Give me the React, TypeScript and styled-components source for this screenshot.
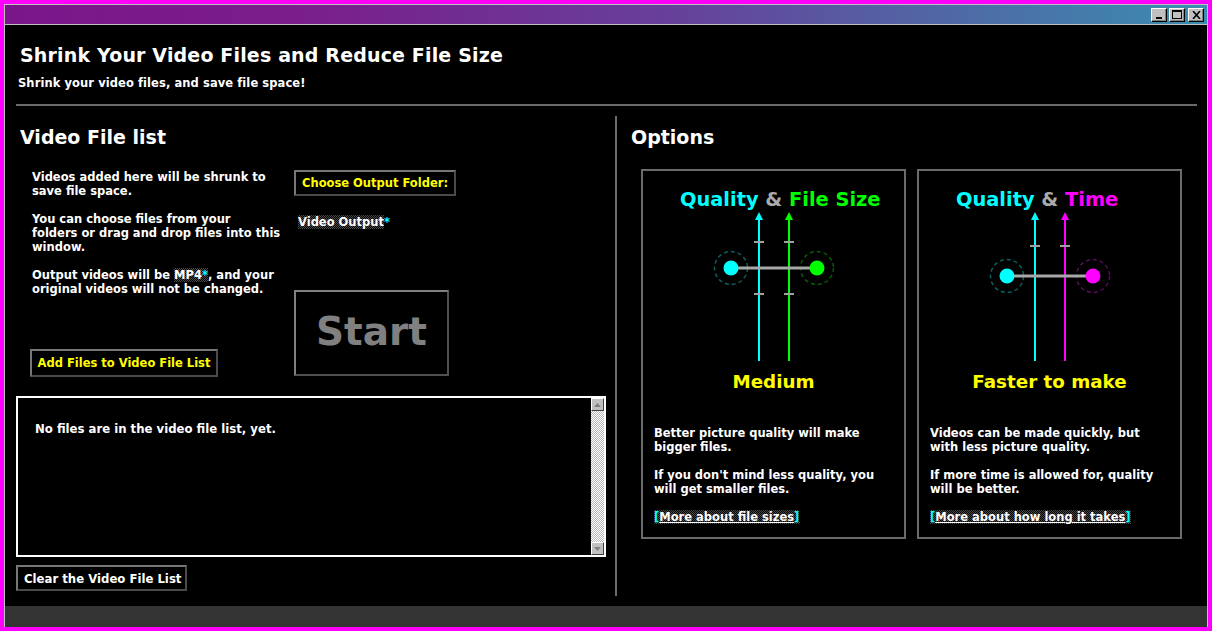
import React from "react";
import styled, { createGlobalStyle } from "styled-components";

const GlobalStyle = createGlobalStyle`
  html, body {
    margin: 0;
    padding: 0;
    background: #000;
  }
  body {
    font-family: "DejaVu Sans", Verdana, sans-serif;
    color: #fff;
  }
`;

const dither = (c: string) =>
  `repeating-conic-gradient(${c} 0% 25%, #000 0% 50%) 0 0 / 2px 2px`;

const Frame = styled.div`
  width: 1212px;
  height: 631px;
  box-sizing: border-box;
  border: 4px solid #ff00ff;
  display: flex;
  flex-direction: column;
  overflow: hidden;
`;

const Win = styled.div`
  flex: 1;
  min-height: 0;
  display: flex;
  flex-direction: column;
  border: 1px solid #c0c0c0;
  border-bottom: none;
  background: #000;
`;

const TitleBar = styled.div`
  height: 19px;
  flex-shrink: 0;
  background: linear-gradient(
    to right,
    #7b168a 0%,
    #7a1e8b 25%,
    #67409a 55%,
    #3a8db0 100%
  );
  border-bottom: 1px solid #c0c0c0;
  display: flex;
  align-items: center;
  justify-content: flex-end;
  gap: 1px;
  padding-right: 3px;
`;

const WinButton = styled.div<{ $gap?: number }>`
  width: 16px;
  height: 14px;
  box-sizing: border-box;
  background: #c0c0c0;
  border: 1px solid;
  border-color: #fff #000 #000 #fff;
  box-shadow: inset -1px -1px #808080;
  display: flex;
  align-items: center;
  justify-content: center;
  margin-left: ${(p) => p.$gap ?? 1}px;
`;

const Content = styled.div`
  flex: 1;
  min-height: 0;
  display: flex;
  flex-direction: column;
`;

const Header = styled.header`
  padding: 18px 0 0 15px;
`;

const Title = styled.h1`
  margin: 0;
  font-size: 19px;
  line-height: 24px;
  font-weight: bold;
  letter-spacing: 0.16px;
  color: #fff;
`;

const Subtitle = styled.div`
  margin-top: 8px;
  margin-left: -2px;
  font-size: 11.5px;
  line-height: 16px;
  font-weight: bold;
  letter-spacing: 0.08px;
`;

const Rule = styled.div`
  height: 2px;
  background: #6a6a6a;
  margin: 13px 10px 0 11px;
`;

const Main = styled.div`
  flex: 1;
  min-height: 0;
  display: flex;
`;

const LeftCol = styled.section`
  width: 590px;
  margin-left: 11px;
  padding-top: 20px;
  display: flex;
  flex-direction: column;
`;

const Heading = styled.h2<{ $indent: number }>`
  margin: 0;
  padding-left: ${(p) => p.$indent}px;
  font-size: 19px;
  line-height: 22px;
  font-weight: bold;
  color: #fff;
`;

const IntroRow = styled.div`
  margin-top: 22px;
  height: 207px;
  display: flex;
`;

const IntroText = styled.div`
  margin-left: 14px;
  width: 252px;
  display: flex;
  flex-direction: column;
  justify-content: space-between;
  align-items: flex-start;
`;

const Para = styled.p`
  margin: 0 0 14px;
  padding-left: 2px;
  font-size: 11.5px;
  line-height: 14px;
  font-weight: bold;
`;

const Dithered = styled.span<{ $tone?: string }>`
  background: ${(p) => dither(p.$tone || "#4a4a4a")};
`;

const Star = styled.span`
  color: #00ffff;
`;

const ActionCol = styled.div`
  margin-left: 12px;
  display: flex;
  flex-direction: column;
  align-items: flex-start;
`;

const Btn = styled.button<{ $color: string; $w: number; $h: number }>`
  box-sizing: border-box;
  width: ${(p) => p.$w}px;
  height: ${(p) => p.$h}px;
  padding: 0;
  background: #000;
  color: ${(p) => p.$color};
  border: 2px solid;
  border-color: #777 #4a4a4a #4a4a4a #777;
  font-family: "DejaVu Sans", Verdana, sans-serif;
  font-size: 11.5px;
  font-weight: bold;
  cursor: pointer;
  flex-shrink: 0;
`;

const CondensedBtn = styled(Btn)`
  font-family: "DejaVu Sans Condensed", "DejaVu Sans", sans-serif;
  font-stretch: condensed;
  font-size: 13px;
  text-align: left;
  padding-left: 6px;
`;

const OutputLabel = styled.div`
  margin: 19px 0 0 4px;
  font-size: 11.5px;
  line-height: 14px;
  font-weight: bold;
`;

const StartBtn = styled.button`
  margin-top: auto;
  margin-bottom: 1px;
  box-sizing: border-box;
  width: 155px;
  height: 86px;
  background: #000;
  border: 2px solid;
  border-color: #808080 #505050 #505050 #808080;
  color: #808080;
  font-family: "DejaVu Sans", Verdana, sans-serif;
  font-size: 39px;
  font-weight: bold;
  padding: 0 0 4px;
`;

const ListBox = styled.div`
  margin-top: 19px;
  height: 161px;
  box-sizing: border-box;
  border: 2px solid #fff;
  display: flex;
`;

const ListMessage = styled.div`
  flex: 1;
  padding: 23px 0 0 17px;
  font-family: "DejaVu Sans Condensed", "DejaVu Sans", sans-serif;
  font-stretch: condensed;
  font-size: 13px;
  line-height: 16px;
  font-weight: bold;
`;

const ScrollBar = styled.div`
  width: 13px;
  display: flex;
  flex-direction: column;
  justify-content: space-between;
  background: repeating-conic-gradient(#fff 0% 25%, #b8b8b8 0% 50%) 0 0 / 2px 2px;
`;

const ScrollBtn = styled.div`
  height: 13px;
  box-sizing: border-box;
  background: #c0c0c0;
  border: 1px solid;
  border-color: #fff #404040 #404040 #fff;
  display: flex;
  align-items: center;
  justify-content: center;
`;

const ClearRow = styled.div`
  margin-top: 8px;
`;

const Divider = styled.div`
  width: 2px;
  background: #6a6a6a;
  margin: 10px 0 10px 9px;
`;

const RightCol = styled.section`
  flex: 1;
  padding: 20px 0 0 14px;
  display: flex;
  flex-direction: column;
`;

const Cards = styled.div`
  margin: 21px 0 0 10px;
  display: flex;
  gap: 11px;
`;

const Card = styled.div`
  width: 265px;
  height: 370px;
  box-sizing: border-box;
  border: 2px solid #6a6a6a;
  padding-top: 18px;
  display: flex;
  flex-direction: column;
  align-items: center;
`;

const CardTitle = styled.div`
  align-self: stretch;
  padding-left: 37px;
  font-size: 19.4px;
  line-height: 22px;
  font-weight: bold;
  white-space: nowrap;
`;

const Tone = styled.span<{ $c: string }>`
  color: ${(p) => p.$c};
`;

const Verdict = styled.div`
  margin-top: 9px;
  font-size: 18.3px;
  line-height: 22px;
  font-weight: bold;
  color: #ffff00;
`;

const Desc = styled.div`
  align-self: stretch;
  margin-top: 33px;
  padding: 0 11px;
  font-size: 11.5px;
  line-height: 14px;
  font-weight: bold;
`;

const DescPara = styled.p`
  margin: 0 0 14px;
`;

const MoreLink = styled.a`
  color: #fff;
  text-decoration: underline;
  background: ${dither("#4a4a4a")};
  cursor: pointer;
`;

const StatusBar = styled.div`
  height: 21px;
  flex-shrink: 0;
  background: #333;
`;

type DiagramProps = {
  right: string;
  rightDim: string;
  barY: number;
  ticks: number[];
};

function Diagram({ right, rightDim, barY, ticks }: DiagramProps) {
  const arrows = [
    { x: 50, c: "#00ffff" },
    { x: 80, c: right },
  ];
  return (
    <svg width="130" height="151" viewBox="0 0 130 151">
      {arrows.map((a) => (
        <g key={a.x}>
          <line x1={a.x} y1={8} x2={a.x} y2={150} stroke={a.c} strokeWidth={2} />
          <polygon points={`${a.x},1 ${a.x - 4},9 ${a.x + 4},9`} fill={a.c} />
        </g>
      ))}
      {ticks.map((t) =>
        arrows.map((a) => (
          <rect key={`${t}-${a.x}`} x={a.x - 5} y={t - 1} width={10} height={2} fill="#a0a0a0" />
        ))
      )}
      <circle cx={22} cy={barY} r={16.5} fill="none" stroke="#0e5e5e" strokeWidth={1.5} strokeDasharray="4 3" />
      <circle cx={108} cy={barY} r={16.5} fill="none" stroke={rightDim} strokeWidth={1.5} strokeDasharray="4 3" />
      <line x1={22} y1={barY} x2={108} y2={barY} stroke="#a8a8a8" strokeWidth={3} />
      <circle cx={22} cy={barY} r={7.5} fill="#00ffff" />
      <circle cx={108} cy={barY} r={7.5} fill={right} />
    </svg>
  );
}

export default function App() {
  return (
    <>
      <GlobalStyle />
      <Frame>
        <Win>
          <TitleBar>
            <WinButton>
              <svg width="8" height="8" viewBox="0 0 8 8">
                <rect x="1" y="6" width="6" height="2" fill="#000" />
              </svg>
            </WinButton>
            <WinButton>
              <svg width="10" height="9" viewBox="0 0 10 9">
                <rect x="0.5" y="0.5" width="9" height="8" fill="none" stroke="#000" />
                <rect x="0" y="0" width="10" height="2" fill="#000" />
              </svg>
            </WinButton>
            <WinButton $gap={2}>
              <svg width="9" height="8" viewBox="0 0 9 8">
                <path d="M1 0 L8 8 M8 0 L1 8" stroke="#000" strokeWidth="1.6" />
              </svg>
            </WinButton>
          </TitleBar>
          <Content>
            <Header>
              <Title>Shrink Your Video Files and Reduce File Size</Title>
              <Subtitle>Shrink your video files, and save file space!</Subtitle>
            </Header>
            <Rule />
            <Main>
              <LeftCol>
                <Heading $indent={4}>Video File list</Heading>
                <IntroRow>
                  <IntroText>
                    <div>
                      <Para>Videos added here will be shrunk to save file space.</Para>
                      <Para>
                        You can choose files from your
                        <br />
                        folders or drag and drop files into this window.
                      </Para>
                      <Para>
                        Output videos will be{" "}
                        <Dithered>
                          MP4<Star>*</Star>
                        </Dithered>
                        , and your original videos will not be changed.
                      </Para>
                    </div>
                    <Btn $color="#ffff00" $w={188} $h={28}>
                      Add Files to Video File List
                    </Btn>
                  </IntroText>
                  <ActionCol>
                    <Btn $color="#ffff00" $w={162} $h={26}>
                      Choose Output Folder:
                    </Btn>
                    <OutputLabel>
                      <Dithered>Video Output</Dithered>
                      <Star>*</Star>
                    </OutputLabel>
                    <StartBtn>Start</StartBtn>
                  </ActionCol>
                </IntroRow>
                <ListBox>
                  <ListMessage>No files are in the video file list, yet.</ListMessage>
                  <ScrollBar>
                    <ScrollBtn>
                      <svg width="7" height="4" viewBox="0 0 7 4">
                        <polygon points="3.5,0 7,4 0,4" fill="#808080" />
                      </svg>
                    </ScrollBtn>
                    <ScrollBtn>
                      <svg width="7" height="4" viewBox="0 0 7 4">
                        <polygon points="0,0 7,0 3.5,4" fill="#808080" />
                      </svg>
                    </ScrollBtn>
                  </ScrollBar>
                </ListBox>
                <ClearRow>
                  <CondensedBtn $color="#fff" $w={171} $h={26}>
                    Clear the Video File List
                  </CondensedBtn>
                </ClearRow>
              </LeftCol>
              <Divider />
              <RightCol>
                <Heading $indent={0}>Options</Heading>
                <Cards>
                  <Card>
                    <CardTitle>
                      <Tone $c="#00ffff">Quality</Tone> <Tone $c="#aaaaaa">&amp;</Tone>{" "}
                      <Tone $c="#00ff00">File Size</Tone>
                    </CardTitle>
                    <Diagram right="#00ff00" rightDim="#0b5a0b" barY={57} ticks={[31, 83]} />
                    <Verdict>Medium</Verdict>
                    <Desc>
                      <DescPara>Better picture quality will make bigger files.</DescPara>
                      <DescPara>If you don't mind less quality, you will get smaller files.</DescPara>
                      <MoreLink>
                        <Star>[</Star>More about file sizes<Star>]</Star>
                      </MoreLink>
                    </Desc>
                  </Card>
                  <Card>
                    <CardTitle>
                      <Tone $c="#00ffff">Quality</Tone> <Tone $c="#aaaaaa">&amp;</Tone>{" "}
                      <Tone $c="#ff00ff">Time</Tone>
                    </CardTitle>
                    <Diagram right="#ff00ff" rightDim="#5a0a5a" barY={65} ticks={[35]} />
                    <Verdict>Faster to make</Verdict>
                    <Desc>
                      <DescPara>Videos can be made quickly, but with less picture quality.</DescPara>
                      <DescPara>If more time is allowed for, quality will be better.</DescPara>
                      <MoreLink>
                        <Star>[</Star>More about how long it takes<Star>]</Star>
                      </MoreLink>
                    </Desc>
                  </Card>
                </Cards>
              </RightCol>
            </Main>
          </Content>
          <StatusBar />
        </Win>
      </Frame>
    </>
  );
}
